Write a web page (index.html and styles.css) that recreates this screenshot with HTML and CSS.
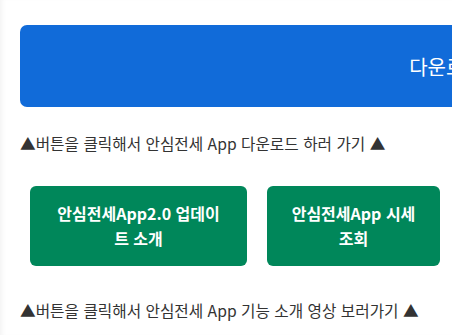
FILE: index.html
```html
<!DOCTYPE html>
<html lang="ko">
<head>
  <meta charset="UTF-8">
  <meta name="viewport" content="width=device-width, initial-scale=1.0">
  <title>안심전세 App</title>
  <link rel="stylesheet" href="styles.css">
</head>
<body>

  <!-- Main content -->
  <div class="page">
    <a href="#" class="download-btn">다운로드</a>
    <p class="caption">▲버튼을 클릭해서 안심전세 App 다운로드 하러 가기 ▲</p>

    <!-- App buttons -->
    <div class="app-buttons">
      <a href="#" class="app-btn wide">안심전세App2.0 업데이트 소개</a>
      <a href="#" class="app-btn narrow">안심전세App 시세 조회</a>
    </div>
    <p class="caption">▲버튼을 클릭해서 안심전세 App 기능 소개 영상 보러가기 ▲</p>
  </div>

</body>
</html>
```

FILE: styles.css
```css
/* Page styles */

* {
  box-sizing: border-box;
  margin: 0;
  padding: 0;
  font-family: "Noto Sans CJK KR", "Noto Sans", sans-serif;
}

body {
  background: #fff;
  overflow: hidden;
}

.page {
  min-height: 100vh;
  padding: 25px 0 0 20px;
  box-shadow: inset 5px 0 5px -3px rgba(0, 0, 0, 0.05);
}

.download-btn {
  display: flex;
  justify-content: center;
  align-items: center;
  width: 852px;
  height: 82px;
  background: #116bd9;
  color: #fff;
  font-size: 20px;
  text-decoration: none;
  border-radius: 7px;
}

.caption {
  margin-top: 26px;
  font-size: 15.7px;
  line-height: 22px;
  color: #333;
  white-space: nowrap;
}

.app-buttons {
  display: flex;
  gap: 20px;
  margin: 31px 0 34px 10px;
}

.app-btn {
  display: flex;
  justify-content: center;
  align-items: center;
  height: 80px;
  background: #00875a;
  color: #fff;
  font-size: 16px;
  font-weight: 600;
  line-height: 25px;
  text-align: center;
  text-decoration: none;
  border-radius: 6px;
}

.app-btn.wide {
  width: 217px;
  padding: 0 24px;
}

.app-btn.narrow {
  width: 173px;
  padding: 0 20px;
}

.app-buttons + .caption {
  margin-top: 0;
}
```
